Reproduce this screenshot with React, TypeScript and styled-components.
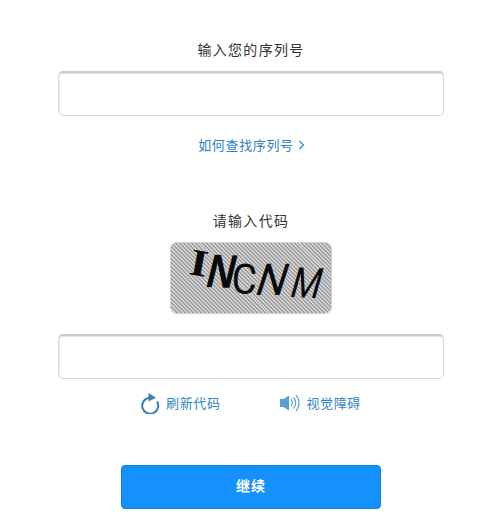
import * as React from "react";
import styled, { createGlobalStyle } from "styled-components";

const GlobalStyle = createGlobalStyle`
  html, body {
    margin: 0;
    padding: 0;
    background: #fff;
  }
`;

const Page = styled.div`
  width: 503px;
  height: 524px;
  box-sizing: border-box;
  padding: 39px 59px 0 58px;
  display: flex;
  flex-direction: column;
  align-items: center;
  font-family: "Noto Sans CJK SC", "Noto Sans", sans-serif;
  overflow: hidden;
`;

const Label = styled.div`
  font-size: 14px;
  line-height: 20px;
  letter-spacing: 1.3px;
  color: #333;
  text-align: center;
`;

const TextInput = styled.input<{ $top: number }>`
  display: block;
  width: 100%;
  height: 45px;
  box-sizing: border-box;
  margin-top: ${(props) => props.$top}px;
  border: 1px solid #dadada;
  border-top: 2px solid #cbcbcb;
  border-radius: 5px;
  box-shadow: inset 0 1px 1px #e4e4e4, inset 1px 0 1px #efefef;
  background: #fff;
  outline: none;
`;

const HelpLink = styled.a`
  display: flex;
  align-items: center;
  gap: 5px;
  margin-top: 19px;
  font-size: 13px;
  line-height: 20px;
  letter-spacing: 0.65px;
  color: #2a80c5;
  text-decoration: none;
`;

const CodeLabel = styled(Label)`
  margin-top: 55px;
`;

const Captcha = styled.div`
  margin-top: 12px;
  width: 162px;
  height: 72px;
  border-radius: 7px;
  overflow: hidden;
  border: 1px solid #cfcfcf;
  box-sizing: border-box;
  background: repeating-linear-gradient(45deg, #d2d2d2 0 1.4px, #a2a2a2 1.4px 2.8px);
`;

const CaptchaArt = styled.svg`
  display: block;
  width: 100%;
  height: 100%;
`;

const ActionRow = styled.div`
  display: flex;
  align-items: center;
  margin-top: 13px;
  gap: 58px;
  padding-right: 1px;
`;

const Action = styled.a`
  display: flex;
  align-items: center;
  gap: 6px;
  font-size: 13px;
  line-height: 22px;
  letter-spacing: 0.6px;
  color: #2e86c1;
  text-decoration: none;
`;

const SubmitButton = styled.button`
  margin-top: 51px;
  width: 260px;
  height: 44px;
  padding: 0 0 5px;
  border: 1px solid #0a85dc;
  border-radius: 4px;
  background: #1490ff;
  color: #fff;
  font-family: inherit;
  font-size: 14px;
  font-weight: 700;
  letter-spacing: 1px;
`;

const RefreshIcon = () => (
  <svg width="20" height="22" viewBox="0 0 20 22" fill="none">
    <path d="M9.500 5.800A8 8 0 1 0 17 9.500" stroke="#3a83ad" strokeWidth="2" />
    <path d="M8.500 1l7.500 4.700L8.500 9.500z" fill="#3a83ad" />
  </svg>
);

const SoundIcon = () => (
  <svg width="22" height="18" viewBox="0 0 22 18" fill="none">
    <path d="M1 5h3.500L10 1.500v15L4.500 13H1z" fill="#5b9fd0" />
    <path d="M12 5.500a5 5 0 0 1 0 7M14.500 3.500a8 8 0 0 1 0 11M17 1a12 12 0 0 1 0 16" stroke="#5b9fd0" strokeWidth="1.1" />
  </svg>
);

const Chevron = () => (
  <svg width="5" height="10" viewBox="0 0 5 10" fill="none">
    <path d="M.5 1l4 4-4 4" stroke="#2a80c5" strokeWidth="1.2" />
  </svg>
);

export default function App() {
  return (
    <Page>
      <GlobalStyle />
      <Label>输入您的序列号</Label>
      <TextInput $top={12} />
      <HelpLink href="#">
        如何查找序列号
        <Chevron />
      </HelpLink>
      <CodeLabel>请输入代码</CodeLabel>
      <Captcha>
        <CaptchaArt viewBox="0 0 160 70">
          <g fontFamily="Roboto, sans-serif" fill="#0a0a0a">
            <text transform="translate(17 31) rotate(10) scale(1.15 0.95)" fontSize="40" fontWeight="700" fontFamily="'Liberation Serif', serif">I</text>
            <text transform="translate(33 44) rotate(2) skewX(-12) scale(0.88 1.08)" fontSize="44" fontWeight="700" fontFamily="'Liberation Sans', sans-serif">N</text>
            <text transform="translate(60 50) rotate(3) scale(0.92 1)" fontSize="42" fontWeight="400">C</text>
            <text transform="translate(82 52) skewX(-18) scale(1 1.05)" fontSize="42" fontWeight="400">N</text>
            <text transform="translate(117 54) rotate(2) skewX(-14) scale(0.82 1)" fontSize="42" fontWeight="400">M</text>
          </g>
        </CaptchaArt>
      </Captcha>
      <TextInput $top={20} />
      <ActionRow>
        <Action href="#">
          <RefreshIcon />
          刷新代码
        </Action>
        <Action href="#">
          <SoundIcon />
          视觉障碍
        </Action>
      </ActionRow>
      <SubmitButton>继续</SubmitButton>
    </Page>
  );
}
